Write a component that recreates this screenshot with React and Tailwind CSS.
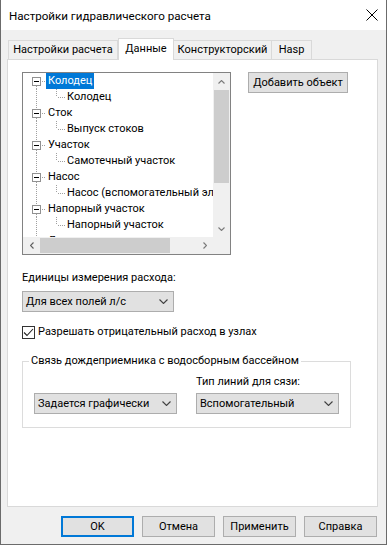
import React from 'react';

const treeItems = [
  { root: 'Колодец', child: 'Колодец', selected: true },
  { root: 'Сток', child: 'Выпуск стоков' },
  { root: 'Участок', child: 'Самотечный участок' },
  { root: 'Насос', child: 'Насос (вспомогательный элемент)' },
  { root: 'Напорный участок', child: 'Напорный участок' },
  { root: 'Дождеприемник', child: 'Дождеприемник' },
];

function Chevron({ dir = 'down', color = '#333333', w = 9, h = 5 }) {
  const paths = {
    down: `M0.5 0.5 L${w / 2} ${h - 0.5} L${w - 0.5} 0.5`,
    up: `M0.5 ${h - 0.5} L${w / 2} 0.5 L${w - 0.5} ${h - 0.5}`,
  };
  if (dir === 'left' || dir === 'right') {
    const d = dir === 'left'
      ? `M${h - 0.5} 0.5 L0.5 ${w / 2} L${h - 0.5} ${w - 0.5}`
      : `M0.5 0.5 L${h - 0.5} ${w / 2} L0.5 ${w - 0.5}`;
    return (
      <svg width={h} height={w} viewBox={`0 0 ${h} ${w}`}>
        <path d={d} stroke={color} strokeWidth="1.2" fill="none" />
      </svg>
    );
  }
  return (
    <svg width={w} height={h} viewBox={`0 0 ${w} ${h}`}>
      <path d={paths[dir]} stroke={color} strokeWidth="1.1" fill="none" />
    </svg>
  );
}

function RootGutter({ first }) {
  return (
    <svg width="23" height="16" viewBox="0 0 23 16" className="shrink-0" shapeRendering="crispEdges">
      {!first && <line x1="13.5" y1="0" x2="13.5" y2="4" stroke="#a0a0a0" strokeDasharray="1 1" />}
      <line x1="13.5" y1="13" x2="13.5" y2="16" stroke="#a0a0a0" strokeDasharray="1 1" />
      <line x1="19" y1="8.5" x2="23" y2="8.5" stroke="#a0a0a0" strokeDasharray="1 1" />
      <rect x="9.5" y="4.5" width="8" height="8" fill="#ffffff" stroke="#919191" />
      <line x1="11" y1="8.5" x2="16" y2="8.5" stroke="#000000" />
    </svg>
  );
}

function ChildGutter() {
  return (
    <svg width="42" height="16" viewBox="0 0 42 16" className="shrink-0" shapeRendering="crispEdges">
      <line x1="13.5" y1="0" x2="13.5" y2="16" stroke="#a0a0a0" strokeDasharray="1 1" />
      <line x1="33.5" y1="0" x2="33.5" y2="8" stroke="#a0a0a0" strokeDasharray="1 1" />
      <line x1="35" y1="8.5" x2="42" y2="8.5" stroke="#a0a0a0" strokeDasharray="1 1" />
    </svg>
  );
}

function Dropdown({ value, width }) {
  return (
    <div
      className="flex h-[21px] items-center justify-between border border-[#adadad] bg-[#e1e1e1] pl-[3px] pr-[5px]"
      style={{ width }}
    >
      <span className="whitespace-nowrap leading-none">{value}</span>
      <Chevron dir="down" color="#404040" w={9} h={5} />
    </div>
  );
}

function Button({ children, primary, className = '' }) {
  return (
    <button
      className={
        'flex h-[21px] items-center justify-center whitespace-nowrap bg-[#e1e1e1] leading-none ' +
        (primary ? 'border-2 border-[#0078d7] ' : 'border border-[#adadad] ') +
        className
      }
    >
      {children}
    </button>
  );
}

function Tree() {
  return (
    <div className="flex h-[183px] w-[209px] shrink-0 flex-col border border-[#828282] bg-white">
      <div className="flex h-[164px]">
        <div className="w-[190px] overflow-hidden">
          {treeItems.map((item, i) => (
            <div key={i}>
              <div className="flex h-[16px] items-center">
                <RootGutter first={i === 0} />
                <span
                  className={
                    'flex h-[16px] items-center whitespace-nowrap px-[2px] ' +
                    (item.selected ? 'bg-[#0078d7] text-white' : '')
                  }
                >
                  {item.root}
                </span>
              </div>
              <div className="flex h-[16px] items-center">
                <ChildGutter />
                <span className="whitespace-nowrap px-[2px]">{item.child}</span>
              </div>
            </div>
          ))}
        </div>
        <div className="flex w-[17px] flex-col bg-[#f0f0f0]">
          <div className="flex h-[17px] items-center justify-center">
            <Chevron dir="up" color="#7a7a7a" w={7} h={4} />
          </div>
          <div className="ml-[1px] h-[93px] w-[15px] bg-[#cdcdcd]" />
          <div className="flex-1" />
          <div className="flex h-[17px] items-center justify-center">
            <Chevron dir="down" color="#7a7a7a" w={7} h={4} />
          </div>
        </div>
      </div>
      <div className="flex h-[17px] bg-[#f0f0f0]">
        <div className="flex w-[17px] items-center justify-center">
          <Chevron dir="left" color="#606060" w={7} h={4} />
        </div>
        <div className="mt-[1px] h-[15px] w-[130px] bg-[#cdcdcd]" />
        <div className="flex-1" />
        <div className="flex w-[17px] items-center justify-center">
          <Chevron dir="right" color="#7a7a7a" w={7} h={4} />
        </div>
        <div className="w-[17px]" />
      </div>
    </div>
  );
}

export default function App() {
  const tabs = [
    { label: 'Настройки расчета', w: 109 },
    { label: 'Данные', w: 56, active: true },
    { label: 'Конструкторский', w: 98 },
    { label: 'Hasp', w: 40 },
  ];

  return (
    <div className="flex h-[545px] w-[387px] flex-col whitespace-nowrap border-x border-b border-[#6b6b6b] bg-[#f0f0f0] font-['Roboto',sans-serif] text-[11px] leading-[16px] text-black">
      {/* title bar */}
      <div className="flex h-[30px] shrink-0 items-center justify-between bg-white pl-[8px] pr-[6px]">
        <span className="pt-[1px] text-[11.6px]">Настройки гидравлического расчета</span>
        <svg width="14" height="12" viewBox="0 0 14 12" className="mr-[1px]">
          <path d="M1.5 0.5 L12.5 11.5 M12.5 0.5 L1.5 11.5" stroke="#000" strokeWidth="1" fill="none" />
        </svg>
      </div>

      <div className="flex flex-1 flex-col pl-[6px] pr-[8px]">
        {/* tabs */}
        <div className="flex items-end pl-[1px] pt-[8px]">
          {tabs.map((t) =>
            t.active ? (
              <div
                key={t.label}
                className="relative z-10 -mb-px flex h-[22px] shrink-0 items-center justify-center border-x border-t border-[#d9d9d9] bg-white pb-[2px]"
                style={{ width: t.w }}
              >
                {t.label}
              </div>
            ) : (
              <div
                key={t.label}
                className="-ml-px flex h-[19px] shrink-0 items-center justify-center border-x border-t border-[#d9d9d9] bg-[#f0f0f0] first:ml-0"
                style={{ width: t.w + 1 }}
              >
                {t.label}
              </div>
            )
          )}
        </div>

        {/* panel */}
        <div className="flex h-[448px] flex-col border border-[#d9d9d9] bg-white pl-[14px] pt-[12px]">
          <div className="flex items-start">
            <Tree />
            <Button className="ml-[17px] w-[100px]">Добавить объект</Button>
          </div>

          <div className="mt-[15px]">Единицы измерения расхода:</div>
          <div className="mt-[5px]">
            <Dropdown value="Для всех полей л/с" width={152} />
          </div>

          <div className="mt-[12px] flex h-[16px] items-center">
            <div className="flex h-[13px] w-[13px] items-center justify-center border border-[#333333] bg-white">
              <svg width="11" height="9" viewBox="0 0 11 9">
                <path d="M1 4.5 L4 7.5 L10 1" stroke="#222" strokeWidth="1.1" fill="none" />
              </svg>
            </div>
            <span className="ml-[3px]">Разрешать отрицательный расход в узлах</span>
          </div>

          <fieldset className="mt-[13px] w-[329px] border border-[#dcdcdc] pb-[13px] pl-[11px]">
            <legend className="-ml-[5px] px-[2px]">Связь дождеприемника с водосборным бассейном</legend>
            <div className="flex items-end pt-[5px]">
              <Dropdown value="Задается графически" width={143} />
              <div className="ml-[19px] flex flex-col">
                <span className="mb-[3px]">Тип линий для сязи:</span>
                <Dropdown value="Вспомогательный" width={143} />
              </div>
            </div>
          </fieldset>
        </div>

        {/* bottom buttons */}
        <div className="mt-[9px] flex justify-end gap-[8px] pr-[1px]">
          <Button primary className="w-[73px]">OK</Button>
          <Button className="w-[73px]">Отмена</Button>
          <Button className="w-[73px]">Применить</Button>
          <Button className="w-[73px]">Справка</Button>
        </div>
      </div>
    </div>
  );
}
